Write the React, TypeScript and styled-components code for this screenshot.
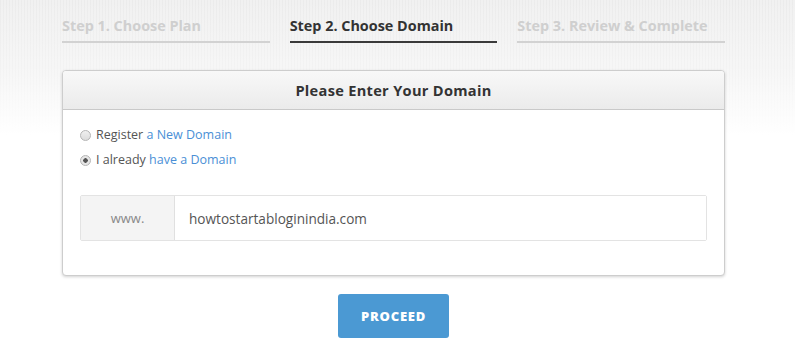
import { FC } from 'react';
import styled, { createGlobalStyle } from 'styled-components';

const GlobalStyle = createGlobalStyle`
    html, body {
        margin: 0;
        padding: 0;
        background: #fff;
    }
    body {
        font-family: 'Open Sans', 'Liberation Sans', sans-serif;
    }
`;

const Page = styled.div`
    min-height: 351px;
    background-color: #fff;
    background-image:
        linear-gradient(180deg, rgba(255, 255, 255, 0) 0px, rgba(255, 255, 255, 0.4) 70px, #ffffff 135px),
        repeating-linear-gradient(90deg, rgba(0, 0, 0, 0.025) 0 1px, transparent 1px 3px),
        linear-gradient(180deg, #f1f1f1, #f1f1f1);
    background-size: 100% 140px;
    background-repeat: no-repeat;
`;

const Container = styled.div`
    width: 663px;
    margin-left: 62px;
    padding-top: 16px;
`;

const Steps = styled.div`
    display: grid;
    grid-template-columns: repeat(3, 1fr);
    column-gap: 20px;
`;

const Step = styled.div<{ $active?: boolean }>`
    font-size: 14.4px;
    font-weight: 700;
    line-height: 20px;
    padding-bottom: 5px;
    color: ${({ $active }) => ($active ? '#333' : '#cfcfcf')};
    border-bottom: 2px solid ${({ $active }) => ($active ? '#3a3a3a' : '#d2d2d2')};
`;

const Card = styled.div`
    margin-top: 27px;
    background: #fff;
    border: 1px solid #cdcdcd;
    border-radius: 4px;
    box-shadow: 0 1px 3px rgba(0, 0, 0, 0.18);
    overflow: hidden;
`;

const CardHeader = styled.div`
    height: 38px;
    display: flex;
    align-items: center;
    justify-content: center;
    background: linear-gradient(180deg, #f8f8f8 0%, #ebebeb 100%);
    border-bottom: 1px solid #c9c9c9;
    font-size: 14.6px;
    font-weight: 700;
    color: #333;
    letter-spacing: 0.3px;
`;

const CardBody = styled.div`
    padding: 16px 17px 34px 17px;
`;

const Options = styled.div`
    display: flex;
    flex-direction: column;
    gap: 7px;
`;

const Option = styled.label`
    display: flex;
    align-items: center;
    gap: 5px;
    font-size: 12.5px;
    line-height: 18px;
    color: #555;
`;

const Radio = styled.span<{ $checked?: boolean }>`
    width: 9px;
    height: 9px;
    border-radius: 50%;
    border: 1px solid #b5b5b5;
    background: ${({ $checked }) =>
        $checked
            ? 'radial-gradient(circle, #555 0 2px, #e6e6e6 2.5px)'
            : 'linear-gradient(180deg, #f0f0f0, #dcdcdc)'};
`;

const Link = styled.a`
    color: #4a8fd6;
    text-decoration: none;
`;

const InputGroup = styled.div`
    margin-top: 26px;
    display: flex;
    height: 44px;
    border: 1px solid #e3e3e3;
    border-radius: 2px;
`;

const Prefix = styled.div`
    width: 93px;
    display: flex;
    align-items: center;
    justify-content: center;
    background: #f4f4f4;
    border-right: 1px solid #e0e0e0;
    font-size: 13px;
    color: #888;
`;

const DomainInput = styled.input`
    flex: 1;
    border: none;
    outline: none;
    padding: 0 0 0 14px;
    font-family: 'Open Sans', 'Liberation Sans', sans-serif;
    font-size: 13.6px;
    color: #555;
    background: #fff;
`;

const Actions = styled.div`
    display: flex;
    justify-content: center;
    margin-top: 18px;
`;

const ProceedButton = styled.button`
    width: 111px;
    height: 44px;
    border: none;
    border-radius: 3px;
    background: #4b99d3;
    color: #fff;
    font-family: 'Open Sans', 'Liberation Sans', sans-serif;
    font-weight: 800;
    font-size: 13px;
    letter-spacing: 0.8px;
    cursor: pointer;
`;

const App: FC = () => (
    <>
        <GlobalStyle />
        <Page>
            <Container>
                <Steps>
                    <Step>Step 1. Choose Plan</Step>
                    <Step $active>Step 2. Choose Domain</Step>
                    <Step>Step 3. Review &amp; Complete</Step>
                </Steps>
                <Card>
                    <CardHeader>Please Enter Your Domain</CardHeader>
                    <CardBody>
                        <Options>
                            <Option>
                                <Radio />
                                <span>
                                    Register <Link>a New Domain</Link>
                                </span>
                            </Option>
                            <Option>
                                <Radio $checked />
                                <span>
                                    I already <Link>have a Domain</Link>
                                </span>
                            </Option>
                        </Options>
                        <InputGroup>
                            <Prefix>www.</Prefix>
                            <DomainInput defaultValue="howtostartabloginindia.com" />
                        </InputGroup>
                    </CardBody>
                </Card>
                <Actions>
                    <ProceedButton>PROCEED</ProceedButton>
                </Actions>
            </Container>
        </Page>
    </>
);

export default App;
